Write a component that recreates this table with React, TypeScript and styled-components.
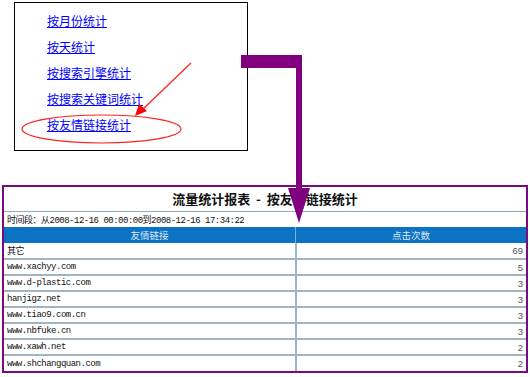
import React from 'react';
import styled, { createGlobalStyle } from 'styled-components';

const GlobalStyle = createGlobalStyle`
	html, body {
		margin: 0;
		padding: 0;
		background: #ffffff;
	}
	body {
		font-family: 'Noto Sans CJK SC', 'Liberation Sans', sans-serif;
	}
`;

const Page = styled.div`
	position: relative;
	width: 530px;
	height: 377px;
	overflow: hidden;
	background: #ffffff;
`;

const MenuBox = styled.div`
	box-sizing: border-box;
	width: 234px;
	height: 149px;
	margin: 2px 0 0 14px;
	border: 1px solid #000000;
	padding: 8px 0 0 32px;
	display: flex;
	flex-direction: column;
	gap: 6.5px;
`;

const MenuLink = styled.a`
	font-family: 'Noto Sans CJK SC', sans-serif;
	font-size: 12px;
	line-height: 19.5px;
	color: #0000ff;
	text-decoration: underline;
	text-underline-offset: 1px;
	cursor: pointer;
`;

const ReportFrame = styled.div`
	box-sizing: border-box;
	width: 526px;
	margin: 34px 0 0 2px;
	border: 2px solid #7a0a82;
	background: #ffffff;
`;

const Title = styled.div`
	height: 23px;
	display: flex;
	align-items: center;
	justify-content: center;
	font-family: 'Noto Sans CJK SC', sans-serif;
	font-weight: bold;
	font-size: 13px;
	color: #111111;
	white-space: pre;
	border-bottom: 1px solid #93aabb;
	padding-bottom: 1px;
`;

const Period = styled.div`
	height: 15px;
	display: flex;
	align-items: center;
	padding-left: 3px;
	font-family: 'Liberation Mono', 'Noto Sans CJK SC', monospace;
	font-size: 9px;
	letter-spacing: -0.5px;
	color: #111111;
`;

const Table = styled.table`
	width: 100%;
	border-collapse: collapse;
	table-layout: fixed;
`;

const HeadCell = styled.th`
	height: 16px;
	padding: 0;
	background: #0b72c4;
	color: #dce8f4;
	font-family: 'Noto Sans CJK SC', sans-serif;
	font-weight: normal;
	font-size: 9.5px;
	text-align: center;
	border-left: 1px solid #7fb0d8;
	&:first-child {
		border-left: none;
		width: 291px;
	}
`;

const Cell = styled.td<{ $num?: boolean }>`
	box-sizing: border-box;
	height: 16px;
	padding: 0 ${(p) => (p.$num ? '3px' : '0')} 0 ${(p) => (p.$num ? '0' : '3px')};
	border-top: 2px solid #9fb4c4;
	border-left: ${(p) => (p.$num ? '2px solid #9fb4c4' : 'none')};
	text-align: ${(p) => (p.$num ? 'right' : 'left')};
	font-family: ${(p) =>
		p.$num ? "'Liberation Sans', sans-serif" : "'Liberation Mono', 'Noto Sans CJK SC', monospace"};
	font-size: ${(p) => (p.$num ? '9.5px' : '9px')};
	letter-spacing: ${(p) => (p.$num ? '0' : '-0.5px')};
	color: ${(p) => (p.$num ? '#555555' : '#111111')};
	white-space: nowrap;
	tr:first-child > & {
		border-top: none;
	}
`;

const Overlay = styled.svg`
	position: absolute;
	left: 0;
	top: 0;
	pointer-events: none;
`;

const links = ['按月份统计', '按天统计', '按搜索引擎统计', '按搜索关键词统计', '按友情链接统计'];

const rows: [string, number][] = [
	['其它', 69],
	['www.xachyy.com', 5],
	['www.d-plastic.com', 3],
	['hanjigz.net', 3],
	['www.tiao9.com.cn', 3],
	['www.nbfuke.cn', 3],
	['www.xawh.net', 2],
	['www.shchangquan.com', 2],
];

export default function App() {
	return (
		<Page>
			<GlobalStyle />
			<MenuBox>
				{links.map((l) => (
					<MenuLink key={l}>{l}</MenuLink>
				))}
			</MenuBox>
			<ReportFrame>
				<Title>{'流量统计报表  -  按友情链接统计'}</Title>
				<Period>时间段：从2008-12-16 00:00:00到2008-12-16 17:34:22</Period>
				<Table>
					<thead>
						<tr>
							<HeadCell>友情链接</HeadCell>
							<HeadCell>点击次数</HeadCell>
						</tr>
					</thead>
					<tbody>
						{rows.map(([site, hits]) => (
							<tr key={site}>
								<Cell>{site}</Cell>
								<Cell $num>{hits}</Cell>
							</tr>
						))}
					</tbody>
				</Table>
			</ReportFrame>
			{/* annotations drawn over the screenshot */}
			<Overlay width="530" height="377" viewBox="0 0 530 377">
				<ellipse cx="101.5" cy="129" rx="79.5" ry="14" fill="none" stroke="#ff2020" strokeWidth="1.2" />
				<line x1="191" y1="63" x2="142" y2="110" stroke="#ff3030" strokeWidth="1.5" />
				<polygon points="135,116 139,104 147,111" fill="#ff0000" />
				<polygon
					points="241,55 302,55 302,188 310,188 299,223 288,188 296,188 296,68 241,68"
					fill="#800080"
				/>
			</Overlay>
		</Page>
	);
}
